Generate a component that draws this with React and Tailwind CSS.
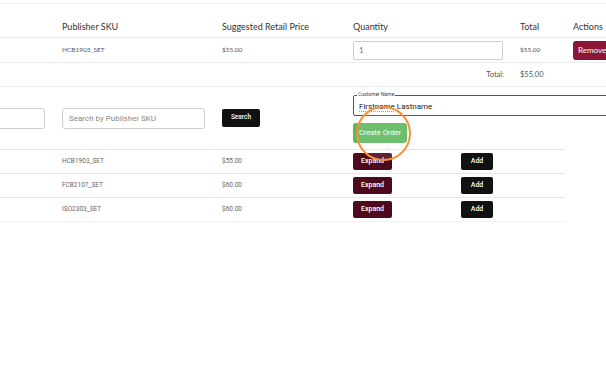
import React from 'react'

const orderCols = 'grid grid-cols-[62px_160px_131px_167px_53px_1fr]'
const bookCols = 'grid grid-cols-[62px_160px_131px_108px_1fr]'

const books = [
  { sku: 'HCB1903_SET', price: '$55.00' },
  { sku: 'FCB2107_SET', price: '$60.00' },
  { sku: 'ISO2303_SET', price: '$60.00' },
]

export default function App() {
  return (
    <div className="relative w-[606px] h-[388px] overflow-hidden bg-white">
      <div className="h-[4px] border-b border-[#f0f0f0]" />

      {/* order summary */}
      <div className="font-['Lato',sans-serif] text-[#333]">
        <div className={`${orderCols} h-[34px] items-end pb-[4px] border-b border-[#ececec] text-[9px]`}>
          <div />
          <div>Publisher SKU</div>
          <div>Suggested Retail Price</div>
          <div>Quantity</div>
          <div>Total</div>
          <div className="whitespace-nowrap">Actions</div>
        </div>
        <div className={`${orderCols} h-[25px] items-center border-b border-[#ececec] text-[6.5px] text-[#555]`}>
          <div />
          <div>HCB1903_SET</div>
          <div>$55.00</div>
          <div>
            <div className="w-[150px] h-[19px] border border-[#cfcfcf] rounded-[2px] flex items-center px-[5px] text-[8px] text-[#777]">1</div>
          </div>
          <div>$55.00</div>
          <div>
            <button className="block h-[19px] w-[44px] rounded-[3px] bg-[#8c1538] text-white text-[8px] text-left pl-[5px] whitespace-nowrap overflow-hidden">Remove</button>
          </div>
        </div>
        <div className="h-[24px] flex items-center text-[7.5px] text-[#555] border-b border-[#ececec]">
          <div className="w-[520px] text-right pr-[16px]">Total:</div>
          <div>$55.00</div>
        </div>
      </div>

      {/* search + order form */}
      <div className={`${bookCols} w-[565px] h-[63px] border-b border-[#e6e6e6] font-['Roboto',sans-serif]`}>
        <div className="pt-[21px]">
          <div className="-ml-[60px] w-[105px] h-[21px] border border-[#cfcfcf] rounded-[3px]" />
        </div>
        <div className="pt-[21px]">
          <div className="w-[143px] h-[21px] border border-[#cfcfcf] rounded-[3px] flex items-center px-[6px] text-[8px] text-[#888]">Search by Publisher SKU</div>
        </div>
        <div className="pt-[22px]">
          <button className="block w-[38px] h-[18px] rounded-[2px] bg-[#111] text-white text-[6.5px] font-medium">Search</button>
        </div>
        <div className="pt-[8px] col-span-2">
          <div className="relative w-[270px] h-[21px] border-[1.5px] border-[#555] rounded-[2px] flex items-center pt-[2px] pl-[5px] text-[8px] text-[#222]">
            <span className="absolute -top-[4px] left-[3px] bg-white px-[1px] text-[5px] leading-none text-[#444]">Customer Name</span>
            <span className="leading-[10px]"><span className="underline decoration-dotted decoration-[#e57373] underline-offset-[2px]">Firstname</span> Lastname</span>
          </div>
          <button className="block mt-[7px] w-[54px] h-[20px] rounded-[3px] bg-[#5cb85c] text-white text-[7.5px]">Create Order</button>
        </div>
      </div>

      {/* catalogue */}
      <div className="w-[565px] font-['Roboto',sans-serif] text-[6.5px] text-[#666]">
        {books.map((b, i) => (
          <div
            key={b.sku}
            className={`${bookCols} h-[24px] items-center border-b ${i === books.length - 1 ? 'border-[#f2f2f2]' : 'border-[#e6e6e6]'}`}
          >
            <div />
            <div>{b.sku}</div>
            <div>{b.price}</div>
            <div>
              <button className="block w-[39px] h-[17px] rounded-[2px] bg-[#4d0a1e] text-white text-[7px] font-medium">Expand</button>
            </div>
            <div>
              <button className="block w-[32px] h-[17px] rounded-[2px] bg-[#111] text-white text-[7px] font-medium">Add</button>
            </div>
          </div>
        ))}
      </div>

      {/* highlight ring */}
      <div className="absolute left-[356px] top-[106px] w-[55px] h-[55px] rounded-full border-2 border-[#f7923a] bg-white/10" />
    </div>
  )
}
